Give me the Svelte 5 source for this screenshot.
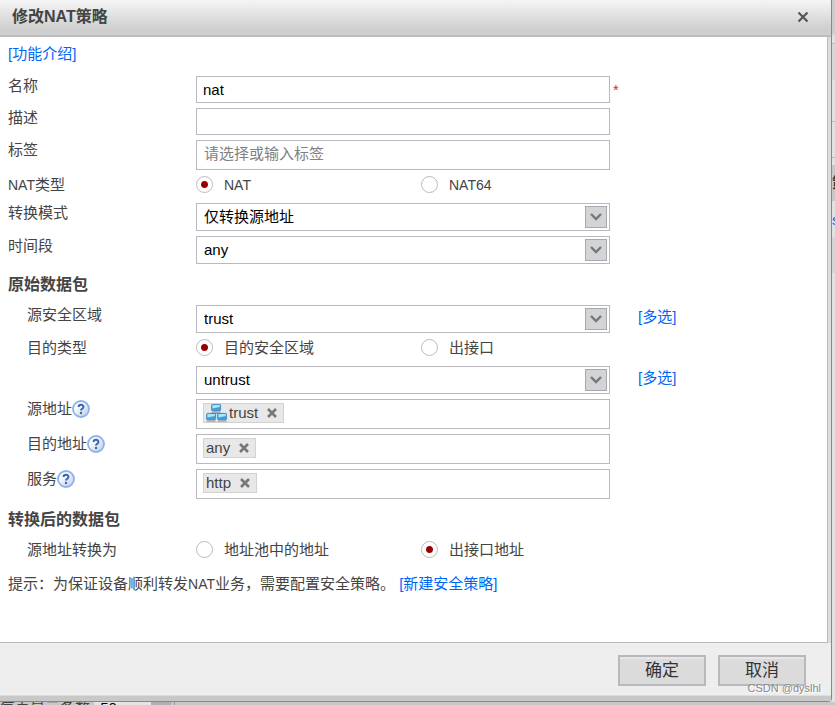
<script>
    let name = 'nat';
    let description = '';
    let natType = 'nat';
    let destType = 'zone';
    let translated = 'interface';

    const tokens = [
        { id: 'source', label: '源地址', value: 'trust', group: true },
        { id: 'dest', label: '目的地址', value: 'any', group: false },
        { id: 'service', label: '服务', value: 'http', group: false }
    ];
</script>

<div class="page">
    <form class="dialog" on:submit|preventDefault>
        <header>
            <h1>修改NAT策略</h1>
            <button type="button" class="close" aria-label="关闭">
                <svg width="12" height="12" viewBox="0 0 12 12"><path d="M1.5 1.5L10.5 10.5M10.5 1.5L1.5 10.5" stroke="#555" stroke-width="2.2" /></svg>
            </button>
        </header>

        <div class="content">
            <div class="intro"><a href="#intro">[功能介绍]</a></div>

            <div class="row">
                <label for="name">名称</label>
                <input id="name" class="box" type="text" bind:value={name}>
                <span class="required">*</span>
            </div>
            <div class="row">
                <label for="description">描述</label>
                <input id="description" class="box" type="text" bind:value={description}>
            </div>
            <div class="row">
                <label for="tag">标签</label>
                <input id="tag" class="box tag" type="text" placeholder="请选择或输入标签">
            </div>
            <div class="row" role="radiogroup" aria-labelledby="nat-type">
                <span id="nat-type"><span class="latin">NAT</span>类型</span>
                <div class="radios">
                    <label><input type="radio" value="nat" bind:group={natType}><span class="latin">NAT</span></label>
                    <label><input type="radio" value="nat64" bind:group={natType}><span class="latin">NAT64</span></label>
                </div>
            </div>
            <div class="row">
                <label for="mode">转换模式</label>
                <div class="select">
                    <select id="mode" class="box"><option>仅转换源地址</option></select>
                    <span class="arrow"><svg width="12" height="8" viewBox="0 0 12 8"><path d="M1 1L6 6L11 1" fill="none" stroke="#777" stroke-width="2.4" /></svg></span>
                </div>
            </div>
            <div class="row">
                <label for="time">时间段</label>
                <div class="select">
                    <select id="time" class="box"><option>any</option></select>
                    <span class="arrow"><svg width="12" height="8" viewBox="0 0 12 8"><path d="M1 1L6 6L11 1" fill="none" stroke="#777" stroke-width="2.4" /></svg></span>
                </div>
            </div>

            <h2>原始数据包</h2>

            <div class="row sub">
                <label for="zone">源安全区域</label>
                <div class="select">
                    <select id="zone" class="box"><option>trust</option></select>
                    <span class="arrow"><svg width="12" height="8" viewBox="0 0 12 8"><path d="M1 1L6 6L11 1" fill="none" stroke="#777" stroke-width="2.4" /></svg></span>
                </div>
                <a class="multi" href="#source-zones">[多选]</a>
            </div>
            <div class="row sub" role="radiogroup" aria-labelledby="dest-type">
                <span id="dest-type">目的类型</span>
                <div class="radios">
                    <label><input type="radio" value="zone" bind:group={destType}>目的安全区域</label>
                    <label><input type="radio" value="interface" bind:group={destType}>出接口</label>
                </div>
            </div>
            <div class="row sub">
                <span></span>
                <div class="select">
                    <select class="box" aria-label="目的安全区域"><option>untrust</option></select>
                    <span class="arrow"><svg width="12" height="8" viewBox="0 0 12 8"><path d="M1 1L6 6L11 1" fill="none" stroke="#777" stroke-width="2.4" /></svg></span>
                </div>
                <a class="multi" href="#dest-zones">[多选]</a>
            </div>

            {#each tokens as token}
                <div class="row sub">
                    <label class="with-help" for={token.id}>
                        {token.label}
                        <svg width="18" height="18" viewBox="0 0 18 18">
                            <defs>
                                <linearGradient id="help-{token.id}" x1="0" y1="0" x2="1" y2="1">
                                    <stop offset="0.3" stop-color="#fafbfd" />
                                    <stop offset="1" stop-color="#bccbe2" />
                                </linearGradient>
                            </defs>
                            <circle cx="9" cy="9" r="8" fill="url(#help-{token.id})" stroke="#8eb2ea" stroke-width="1.8" />
                            <path d="M6.6 7C6.6 4 11.4 4 11.4 6.9C11.4 8.7 9 8.7 9 10.6" fill="none" stroke="#3566ac" stroke-width="2" />
                            <circle cx="9" cy="13" r="1.2" fill="#3566ac" />
                        </svg>
                    </label>
                    <div class="box tokens">
                        <span class="token">
                            {#if token.group}
                                <svg width="21" height="18" viewBox="0 0 21 18">
                                    <path d="M10 7V10M5 11V9.5H16V11" fill="none" stroke="#8e949c" />
                                    {#each [[5, 0], [0, 9], [11, 9]] as [x, y]}
                                        <g transform="translate({x} {y})">
                                            <rect x="0.6" y="0.4" width="9" height="6.4" rx="1" fill="#3f9fdc" stroke="#3c7fae" stroke-width="0.8" />
                                            <path d="M1.4 1H8.8V3L1.4 4.6Z" fill="#a8e4fa" />
                                            <path d="M1.2 7.2H9L10 8.8H0.2Z" fill="#9ea6b6" />
                                        </g>
                                    {/each}
                                </svg>
                            {/if}
                            <span>{token.value}</span>
                            <button type="button" aria-label="删除 {token.value}">
                                <svg width="10" height="10" viewBox="0 0 10 10"><path d="M1 1L9 9M9 1L1 9" stroke="#777" stroke-width="2.6" /></svg>
                            </button>
                        </span>
                        <input id={token.id} type="text">
                    </div>
                </div>
            {/each}

            <h2>转换后的数据包</h2>

            <div class="row sub" role="radiogroup" aria-labelledby="translated">
                <span id="translated">源地址转换为</span>
                <div class="radios">
                    <label><input type="radio" value="pool" bind:group={translated}>地址池中的地址</label>
                    <label><input type="radio" value="interface" bind:group={translated}>出接口地址</label>
                </div>
            </div>
            <p>提示：为保证设备顺利转发<span class="latin">NAT</span>业务，需要配置安全策略。 <a href="#policy">[新建安全策略]</a></p>
        </div>

        <footer>
            <button type="submit">确定</button>
            <button type="button">取消</button>
        </footer>
        <span class="watermark">CSDN @dyslhl</span>
    </form>

    <!-- list page showing past the dialog's right and bottom edges -->
    <div class="behind">
        <div class="bar"></div>
        <div class="tabs"></div>
        <div class="tools"></div>
        <div class="tools second"></div>
        <div class="head">策</div>
        <div class="item">s</div>
        <div class="item alt"></div>
        <div class="rest"></div>
    </div>
    <div class="pager">
        <span>每页显示条数:</span>
        <span class="count">50</span>
        <span class="drop"></span>
        <span class="split"></span>
    </div>
</div>

<style>
    :global(body) {
        background: #e2e2e2;
    }

    .page {
        display: grid;
        grid-template-columns: minmax(0, 1fr) 3px;
        color: #444;
        font-family: "Liberation Sans", "Noto Sans CJK SC", sans-serif;
        font-size: 15px;
        line-height: 20px;
    }

    .page * {
        box-sizing: border-box;
    }

    input,
    select,
    button {
        margin: 0;
        font: inherit;
    }

    a {
        color: #0066f5;
        text-decoration: none;
    }

    .dialog {
        position: relative;
        border-right: 1px solid #888;
        border-bottom: 1px solid #888;
        border-bottom-right-radius: 4px;
        background: #ddd;
    }

    header {
        display: flex;
        align-items: center;
        justify-content: space-between;
        height: 37px;
        padding: 0 22px 2px 12px;
        border-bottom: 2px solid #bdbdbd;
        background: linear-gradient(#f5f5f5, #cecece 85%);
    }

    h1,
    h2 {
        margin: 0;
        font-size: 16px;
        font-weight: bold;
    }

    h2 {
        line-height: 31px;
    }

    .close,
    .token button {
        display: flex;
        padding: 0;
        border: 0;
        background: none;
    }

    .content {
        display: flex;
        flex-direction: column;
        gap: 5px;
        margin-right: 3px;
        padding: 7px 8px 42px;
        border-right: 1px solid #bbb;
        border-bottom: 1px solid #bbb;
        background: #fff;
    }

    .intro {
        height: 27px;
    }

    .row {
        display: grid;
        grid-template-columns: 188px minmax(0, 414px) 1fr;
        align-items: start;
    }

    .sub > :first-child {
        padding-left: 19px;
    }

    .latin {
        font-size: 14px;
    }

    .box {
        width: 100%;
        height: 27px;
        padding: 0 6px;
        border: 1px solid #b8b8be;
        border-radius: 0;
        background: #fff;
        color: #000;
    }

    .box.tag {
        height: 30px;
        padding: 0 7px 4px;
    }

    .tag::placeholder {
        color: #808080;
    }

    .required {
        padding-left: 3px;
        color: #f20;
        line-height: 27px;
    }

    .select {
        display: grid;
        align-items: center;
    }

    .select > * {
        grid-area: 1 / 1;
    }

    select.box {
        height: 28px;
        padding: 0 30px 0 7px;
        appearance: none;
    }

    .arrow {
        display: flex;
        align-items: center;
        justify-content: center;
        justify-self: end;
        width: 22px;
        height: 22px;
        margin-right: 3px;
        border: 1px solid #a8a9b0;
        background: #d3d4d6;
        pointer-events: none;
    }

    .multi {
        padding-left: 28px;
        line-height: 24px;
    }

    .radios {
        display: grid;
        grid-template-columns: 225px 1fr;
        height: 23px;
    }

    .radios label {
        display: flex;
        align-items: center;
        gap: 11px;
        height: 19px;
    }

    .radios input {
        width: 17px;
        height: 17px;
        border: 1px solid #bbb;
        border-radius: 50%;
        background: #fff;
        appearance: none;
    }

    .radios input:checked {
        background: radial-gradient(circle, #900 3px, #fff 4px);
    }

    .with-help {
        display: flex;
        align-items: center;
    }

    .tokens {
        display: flex;
        align-items: start;
        height: 30px;
        padding: 3px 6px;
    }

    .tokens input {
        flex: 1;
        min-width: 0;
        height: 20px;
        padding: 0 4px;
        border: 0;
        outline: 0;
    }

    .token {
        display: flex;
        align-items: center;
        height: 20px;
        padding: 0 6px 0 2px;
        border: 1px solid #d2d2d2;
        background: #e8e8e8;
        color: #444;
    }

    .token svg + span {
        margin-left: 2px;
    }

    .token button {
        margin-left: 9px;
    }

    p {
        margin: 0;
        line-height: 31px;
    }

    footer {
        display: flex;
        justify-content: flex-end;
        gap: 12px;
        margin-bottom: 5px;
        padding: 12px 25px 9px;
        border-bottom: 1px solid #ddd;
        background: #eee;
        box-shadow: 0 5px #c8c8c8;
    }

    footer button {
        width: 88px;
        height: 31px;
        padding: 0;
        border: 2px solid #b9b9bd;
        background: #dbdbdb;
        box-shadow: inset 0 2px #e6e6e6;
        color: #333;
        font-size: 17px;
    }

    .watermark {
        position: absolute;
        right: 10px;
        bottom: 5px;
        color: #888;
        font-size: 11px;
        line-height: 16px;
        text-shadow: 1px 1px #fff;
    }

    .behind {
        display: flex;
        flex-direction: column;
        overflow: hidden;
    }

    .behind > * {
        flex: none;
        overflow: hidden;
    }

    .bar {
        height: 44px;
        border-bottom: 1px solid #bbb;
        background: linear-gradient(#ccc 33px, #e2e2e2 36px);
    }

    .tabs {
        height: 36px;
        background: #d8d8d8;
    }

    .tools {
        height: 42px;
        border-bottom: 1px solid #bbb;
    }

    .tools.second {
        height: 36px;
    }

    .head {
        height: 43px;
        padding-top: 15px;
        background: linear-gradient(#e2e2e2 7px, #c8c8c8 7px);
        color: #333;
        font-weight: bold;
    }

    .item {
        height: 36px;
        padding-top: 9px;
        color: #0066f5;
    }

    .item.alt {
        background: #d5d5d5;
    }

    .behind .rest {
        flex: 1;
    }

    .pager {
        display: flex;
        grid-column: 1 / -1;
        height: 3px;
        overflow: hidden;
        background: #c8c8c8;
        line-height: 12px;
        white-space: nowrap;
    }

    .count {
        width: 57px;
        height: 18px;
        padding-left: 6px;
        background: #e4e4e4;
        color: #000;
    }

    .drop {
        width: 20px;
        height: 18px;
        background: #b0b0b2;
    }

    .split {
        width: 4px;
        height: 18px;
        border-right: 1px solid #999;
    }
</style>
